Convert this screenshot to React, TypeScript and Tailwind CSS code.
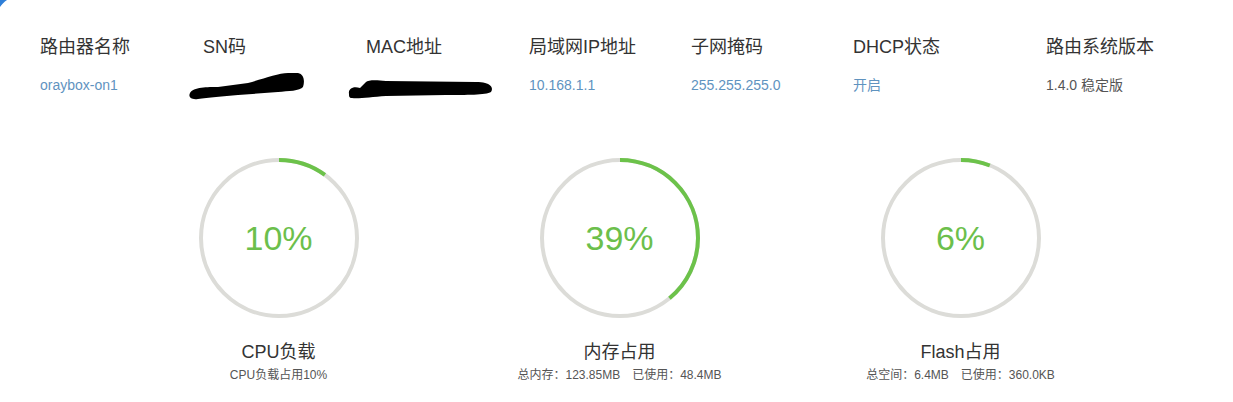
import React from "react";

const font = { fontFamily: '"Liberation Sans", "Noto Sans CJK SC", sans-serif' };

function Ring({ pct }: { pct: number }) {
  const r = 78;
  const c = 2 * Math.PI * r;
  return (
    <div className="relative w-[160px] h-[160px]">
      <svg width="160" height="160" viewBox="0 0 160 160" className="absolute inset-0">
        <circle cx="80" cy="80" r={r} fill="none" stroke="#dcdcd8" strokeWidth="4" />
        <circle
          cx="80"
          cy="80"
          r={r}
          fill="none"
          stroke="#6cc24a"
          strokeWidth="4"
          strokeDasharray={`${(c * pct) / 100} ${c}`}
          transform="rotate(-90 80 80)"
        />
      </svg>
      <div className="absolute inset-0 flex items-center justify-center text-[34px] text-[#6cbf4c]">
        {pct}%
      </div>
    </div>
  );
}

const headers = [
  { label: "路由器名称", w: "w-[163px]" },
  { label: "SN码", w: "w-[163px]" },
  { label: "MAC地址", w: "w-[163px]" },
  { label: "局域网IP地址", w: "w-[162px]" },
  { label: "子网掩码", w: "w-[162px]" },
  { label: "DHCP状态", w: "w-[193px]" },
  { label: "路由系统版本", w: "w-[150px]" },
];

export default function App() {
  return (
    <div className="relative w-[1233px] h-[402px] bg-white overflow-hidden" style={font}>
      <svg className="absolute top-0 left-0" width="10" height="10" viewBox="0 0 10 10">
        <path d="M0 0 L7 0 C4 2 2 4 0 7 Z" fill="#2f7fd8" />
      </svg>

      <div className="pl-[40px] pt-[35px]">
        <div className="flex">
          {headers.map((h) => (
            <div key={h.label} className={`${h.w} text-[18px] leading-[24px] text-[#333]`}>
              {h.label}
            </div>
          ))}
        </div>
        <div className="flex mt-[16px] text-[14px] leading-[20px]">
          <div className="w-[163px] text-[#5f93bf]">oraybox-on1</div>
          <div className="w-[163px] h-[20px] relative">
            <svg className="absolute left-[-15px] top-[-4px]" width="118" height="30" viewBox="0 0 118 30">
              <path
                d="M2 22 C5 16 20 16 30 16 L60 12 C75 8 90 2 100 2 L110 2 C116 3 117 10 115 16 C112 20 100 20 90 21 L50 24 C35 25 20 27 10 28 C3 29 0 26 2 22 Z"
                fill="#000"
              />
            </svg>
          </div>
          <div className="w-[163px] h-[20px] relative">
            <svg className="absolute left-[-20px] top-[1px]" width="148" height="25" viewBox="0 0 148 25">
              <path
                d="M3 18 C2 12 8 10 14 12 L20 6 C22 4 30 4 40 5 L130 6 C145 6 148 12 145 16 C140 19 120 19 100 19 L40 20 C25 21 12 23 6 22 C3 22 3 20 3 18 Z"
                fill="#000"
              />
            </svg>
          </div>
          <div className="w-[162px] text-[#5f93bf]">10.168.1.1</div>
          <div className="w-[162px] text-[#5f93bf]">255.255.255.0</div>
          <div className="w-[193px] text-[#5f93bf]">开启</div>
          <div className="w-[150px] text-[#555]">1.4.0 稳定版</div>
        </div>
      </div>

      <div className="grid grid-cols-[341px_341px_341px] pl-[108px] mt-[63px]">
        {[
          { pct: 10, title: "CPU负载", sub: "CPU负载占用10%" },
          { pct: 39, title: "内存占用", sub: "总内存：123.85MB　已使用：48.4MB" },
          { pct: 6, title: "Flash占用", sub: "总空间：6.4MB　已使用：360.0KB" },
        ].map((it) => (
          <div key={it.title} className="flex flex-col items-center">
            <Ring pct={it.pct} />
            <div className="mt-[22px] text-[18px] leading-[24px] text-[#333]">{it.title}</div>
            <div className="mt-[3px] text-[12px] leading-[16px] text-[#555]">{it.sub}</div>
          </div>
        ))}
      </div>
    </div>
  );
}
